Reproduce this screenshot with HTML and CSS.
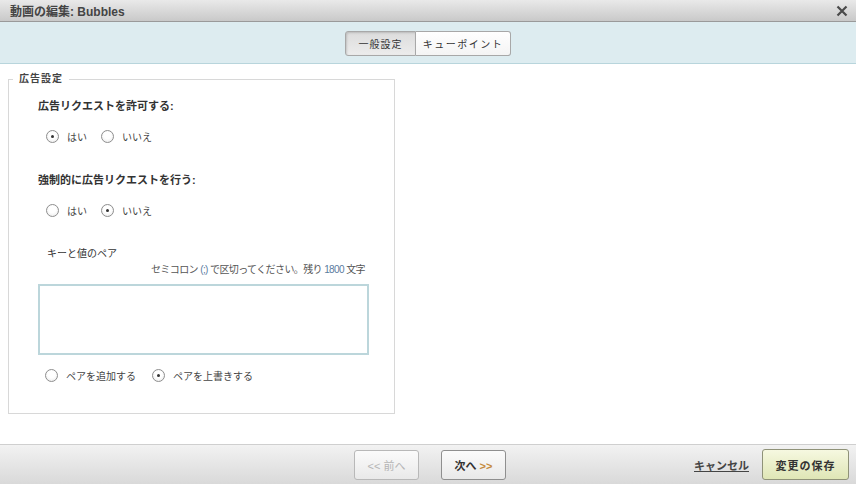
FILE: index.html
```html
<!DOCTYPE html>
<html lang="ja">

<head>
    <meta charset="UTF-8">
    <title>動画の編集: Bubbles</title>
    <link rel="stylesheet" href="styles.css">
</head>

<body>
    <div class="dialog">
        <div class="titlebar">
            <span class="title">動画の編集: Bubbles</span>
            <svg class="close" width="12" height="12" viewBox="0 0 12 12">
                <path d="M1.5 1.5 L10.5 10.5 M10.5 1.5 L1.5 10.5" stroke="#4a4a4a" stroke-width="2.2" />
            </svg>
        </div>

        <div class="tabbar">
            <div class="tabs">
                <button class="tab active">一般設定</button>
                <button class="tab">キューポイント</button>
            </div>
        </div>

        <div class="content">
            <fieldset class="ad-settings">
                <legend>広告設定</legend>

                <div class="field-title first">広告リクエストを許可する:</div>
                <div class="radio-row">
                    <label class="radio"><input type="radio" name="allow" checked><span>はい</span></label>
                    <label class="radio"><input type="radio" name="allow"><span>いいえ</span></label>
                </div>

                <div class="field-title">強制的に広告リクエストを行う:</div>
                <div class="radio-row">
                    <label class="radio"><input type="radio" name="force"><span>はい</span></label>
                    <label class="radio"><input type="radio" name="force" checked><span>いいえ</span></label>
                </div>

                <div class="kv-label">キーと値のペア</div>
                <div class="hint">セミコロン <span class="em">(;)</span> で区切ってください。残り <span class="em">1800</span> 文字</div>
                <textarea class="kv-input" autofocus></textarea>

                <div class="radio-row last">
                    <label class="radio"><input type="radio" name="mode"><span>ペアを追加する</span></label>
                    <label class="radio"><input type="radio" name="mode" checked><span>ペアを上書きする</span></label>
                </div>
            </fieldset>
        </div>

        <div class="footer">
            <div></div>
            <div class="nav">
                <button class="btn" disabled>&lt;&lt; 前へ</button>
                <button class="btn">次へ <span class="arrows">&gt;&gt;</span></button>
            </div>
            <div class="actions">
                <a href="#" class="cancel">キャンセル</a>
                <button class="btn save">変更の保存</button>
            </div>
        </div>
    </div>
</body>

</html>
```

FILE: styles.css
```css
body {
    margin: 0;
    padding: 0;
    font-family: "Liberation Sans", Arial, "Noto Sans CJK JP", sans-serif;
    font-size: 11px;
    color: #333;
    background-color: #fff;
}

.dialog {
    width: 856px;
    height: 484px;
    display: flex;
    flex-direction: column;
}

.titlebar {
    height: 21px;
    border-bottom: 1px solid #9a9a9a;
    background: linear-gradient(#e9e9e9, #c9c9c9);
    display: flex;
    align-items: center;
    justify-content: space-between;
    padding: 0 8px 0 10px;
}

.title {
    font-weight: bold;
    font-size: 12px;
    color: #444;
}

.tabbar {
    height: 41px;
    background-color: #ddecf0;
    border-bottom: 1px solid #b8d5dc;
    display: flex;
    align-items: center;
    justify-content: center;
}

.tabs {
    display: flex;
    margin-top: 1px;
}

.tab {
    height: 25px;
    padding: 0;
    font-family: inherit;
    font-size: 10px;
    letter-spacing: 1px;
    white-space: nowrap;
    color: #333;
    background: linear-gradient(#fff, #f4f4f4);
    border: 1px solid #a8a8a8;
    cursor: pointer;
}

.tab:first-child {
    border-radius: 3px 0 0 3px;
    width: 71px;
}

.tab:last-child {
    border-left: none;
    border-radius: 0 3px 3px 0;
    width: 95px;
    letter-spacing: 1.5px;
}

.tab.active {
    background: linear-gradient(#dcdcdc, #ececec);
    box-shadow: inset 1px 1px 2px rgba(0, 0, 0, 0.15);
}

.content {
    flex: 1;
    padding: 8px 0 0 8px;
}

.ad-settings {
    width: 356px;
    margin: 0;
    padding: 0 0 30px 29px;
    border: 1px solid #d8d8d8;
}

.ad-settings legend {
    font-weight: bold;
    font-size: 10px;
    letter-spacing: 1px;
    color: #444;
    padding: 0 6px;
    margin-left: -25px;
    line-height: 14px;
}

.field-title {
    font-weight: bold;
    line-height: 16px;
    margin-top: 28px;
}

.field-title.first {
    margin-top: 12px;
}

.radio-row {
    display: flex;
    gap: 14px;
    margin-top: 14px;
    padding-left: 8px;
    height: 16px;
    align-items: center;
}

.radio-row.last {
    margin-top: 12px;
    padding-left: 7px;
    gap: 16px;
}

.radio {
    display: flex;
    align-items: center;
    gap: 8px;
    font-size: 10px;
    color: #444;
}

.radio input {
    appearance: none;
    -webkit-appearance: none;
    width: 13px;
    height: 13px;
    margin: 0;
    border: 1px solid #8e8e8e;
    border-radius: 50%;
    background: radial-gradient(circle at 50% 40%, #fff 40%, #e6e6e6);
    display: grid;
    place-items: center;
}

.radio input:checked::after {
    content: "";
    width: 3px;
    height: 3px;
    border-radius: 50%;
    background-color: #333;
}

.kv-label {
    margin-top: 28px;
    padding-left: 9px;
    font-size: 10px;
    line-height: 16px;
}

.hint {
    width: 327px;
    text-align: right;
    font-size: 10px;
    letter-spacing: -0.6px;
    line-height: 16px;
    color: #555;
}

.hint .em {
    color: #5a7ca0;
}

.kv-input {
    display: block;
    box-sizing: border-box;
    width: 331px;
    height: 71px;
    margin-top: 6px;
    border: 2px solid #bcd6db;
    resize: none;
    outline: none;
    font-family: inherit;
    font-size: 11px;
}

.footer {
    height: 39px;
    border-top: 1px solid #cfcfcf;
    background: linear-gradient(#f2f2f2, #d9d9d9);
    display: grid;
    grid-template-columns: 1fr auto 1fr;
    align-items: center;
}

.nav {
    display: flex;
    gap: 22px;
    margin-left: 4px;
}

.btn {
    height: 30px;
    width: 65px;
    font-family: inherit;
    font-size: 11px;
    font-weight: bold;
    color: #333;
    background: linear-gradient(#fbfbfb, #e9e9e9);
    border: 1px solid #8f8f8f;
    border-radius: 3px;
    cursor: pointer;
}

.btn:disabled {
    color: #b5b5b5;
    border-color: #b8b8b8;
    font-weight: normal;
}

.arrows {
    color: #c58a3c;
}

.actions {
    display: flex;
    justify-content: flex-end;
    align-items: center;
    gap: 13px;
    padding-right: 7px;
}

.cancel {
    color: #444;
    font-weight: bold;
}

.btn.save {
    width: 87px;
    height: 31px;
    letter-spacing: 1px;
    background: linear-gradient(#f6f8e0, #dfe6b6);
    border-color: #8f9278;
}
```
